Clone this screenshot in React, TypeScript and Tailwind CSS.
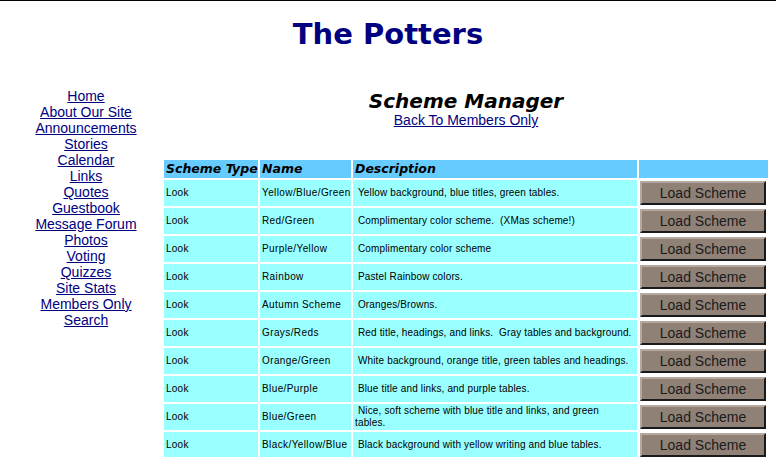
const navLinks = [
  "Home",
  "About Our Site",
  "Announcements",
  "Stories",
  "Calendar",
  "Links",
  "Quotes",
  "Guestbook",
  "Message Forum",
  "Photos",
  "Voting",
  "Quizzes",
  "Site Stats",
  "Members Only",
  "Search",
];

const schemes = [
  { name: "Yellow/Blue/Green", desc: "Yellow background, blue titles, green tables." },
  { name: "Red/Green", desc: "Complimentary color scheme.  (XMas scheme!)" },
  { name: "Purple/Yellow", desc: "Complimentary color scheme" },
  { name: "Rainbow", desc: "Pastel Rainbow colors." },
  { name: "Autumn Scheme", desc: "Oranges/Browns." },
  { name: "Grays/Reds", desc: "Red title, headings, and links.  Gray tables and background." },
  { name: "Orange/Green", desc: "White background, orange title, green tables and headings." },
  { name: "Blue/Purple", desc: "Blue title and links, and purple tables." },
  { name: "Blue/Green", desc: "Nice, soft scheme with blue title and links, and green\ntables." },
  { name: "Black/Yellow/Blue", desc: "Black background with yellow writing and blue tables." },
];

export default function App() {
  return (
    <div className="h-[457px] w-[776px] overflow-hidden border-t border-black bg-white">
      <h1 className="pt-[15px] text-center font-['DejaVu_Sans',sans-serif] text-[29px] font-bold leading-[36px] text-[#000080]">
        The Potters
      </h1>

      <div className="mt-[36px] flex">
        <nav className="flex w-[164px] shrink-0 flex-col items-center pl-[8px] font-['Liberation_Sans',Arial,sans-serif] text-[14px] leading-[16px]">
          {navLinks.map((link) => (
            <a key={link} href="#" className="text-[#000080] underline">
              {link}
            </a>
          ))}
        </nav>

        <main className="w-[604px]">
          <h2 className="pt-[2px] text-center font-['DejaVu_Sans',sans-serif] text-[20px] font-bold italic leading-[22px] text-black">
            Scheme Manager
          </h2>
          <p className="text-center font-['Liberation_Sans',Arial,sans-serif] text-[14px] leading-[16px]">
            <a href="#" className="text-[#000080] underline">
              Back To Members Only
            </a>
          </p>

          <table className="mt-[30px] w-[606px] -ml-[2px] table-fixed border-separate border-spacing-[2px]">
            <colgroup>
              <col className="w-[94px]" />
              <col className="w-[91px]" />
              <col className="w-[284px]" />
              <col className="w-[129px]" />
            </colgroup>
            <thead>
              <tr className="h-[18px] bg-[#66ccff] text-left font-['DejaVu_Sans',sans-serif] text-[12.5px] font-bold italic leading-[16px] text-black">
                <th className="whitespace-nowrap px-[2px] py-0">Scheme Type</th>
                <th className="whitespace-nowrap px-[2px] py-0">Name</th>
                <th className="whitespace-nowrap px-[2px] py-0">Description</th>
                <th className="p-0" />
              </tr>
            </thead>
            <tbody className="font-['Liberation_Sans',Arial,sans-serif] text-[10px] leading-[12px] tracking-[0.25px] text-black">
              {schemes.map((s) => (
                <tr key={s.name} className="h-[26px]">
                  <td className="bg-[#99ffff] px-[2px]">Look</td>
                  <td className="whitespace-nowrap bg-[#99ffff] px-[2px] tracking-[0.4px]">{s.name}</td>
                  <td className="whitespace-pre-wrap bg-[#99ffff] pl-[2px] pr-0 tracking-[0.15px]">{"\u00a0" + s.desc}</td>
                  <td className="p-[1px]">
                    <button
                      type="button"
                      className="h-[24px] w-[126px] border-2 border-t-[#b5a89e] border-l-[#b5a89e] border-r-[#1a1a1a] border-b-[#1a1a1a] bg-[#8f8176] font-['Liberation_Sans',Arial,sans-serif] text-[14px] leading-[18px] tracking-normal text-[#1a1a1a]"
                    >
                      Load Scheme
                    </button>
                  </td>
                </tr>
              ))}
            </tbody>
          </table>
        </main>
      </div>
    </div>
  );
}
